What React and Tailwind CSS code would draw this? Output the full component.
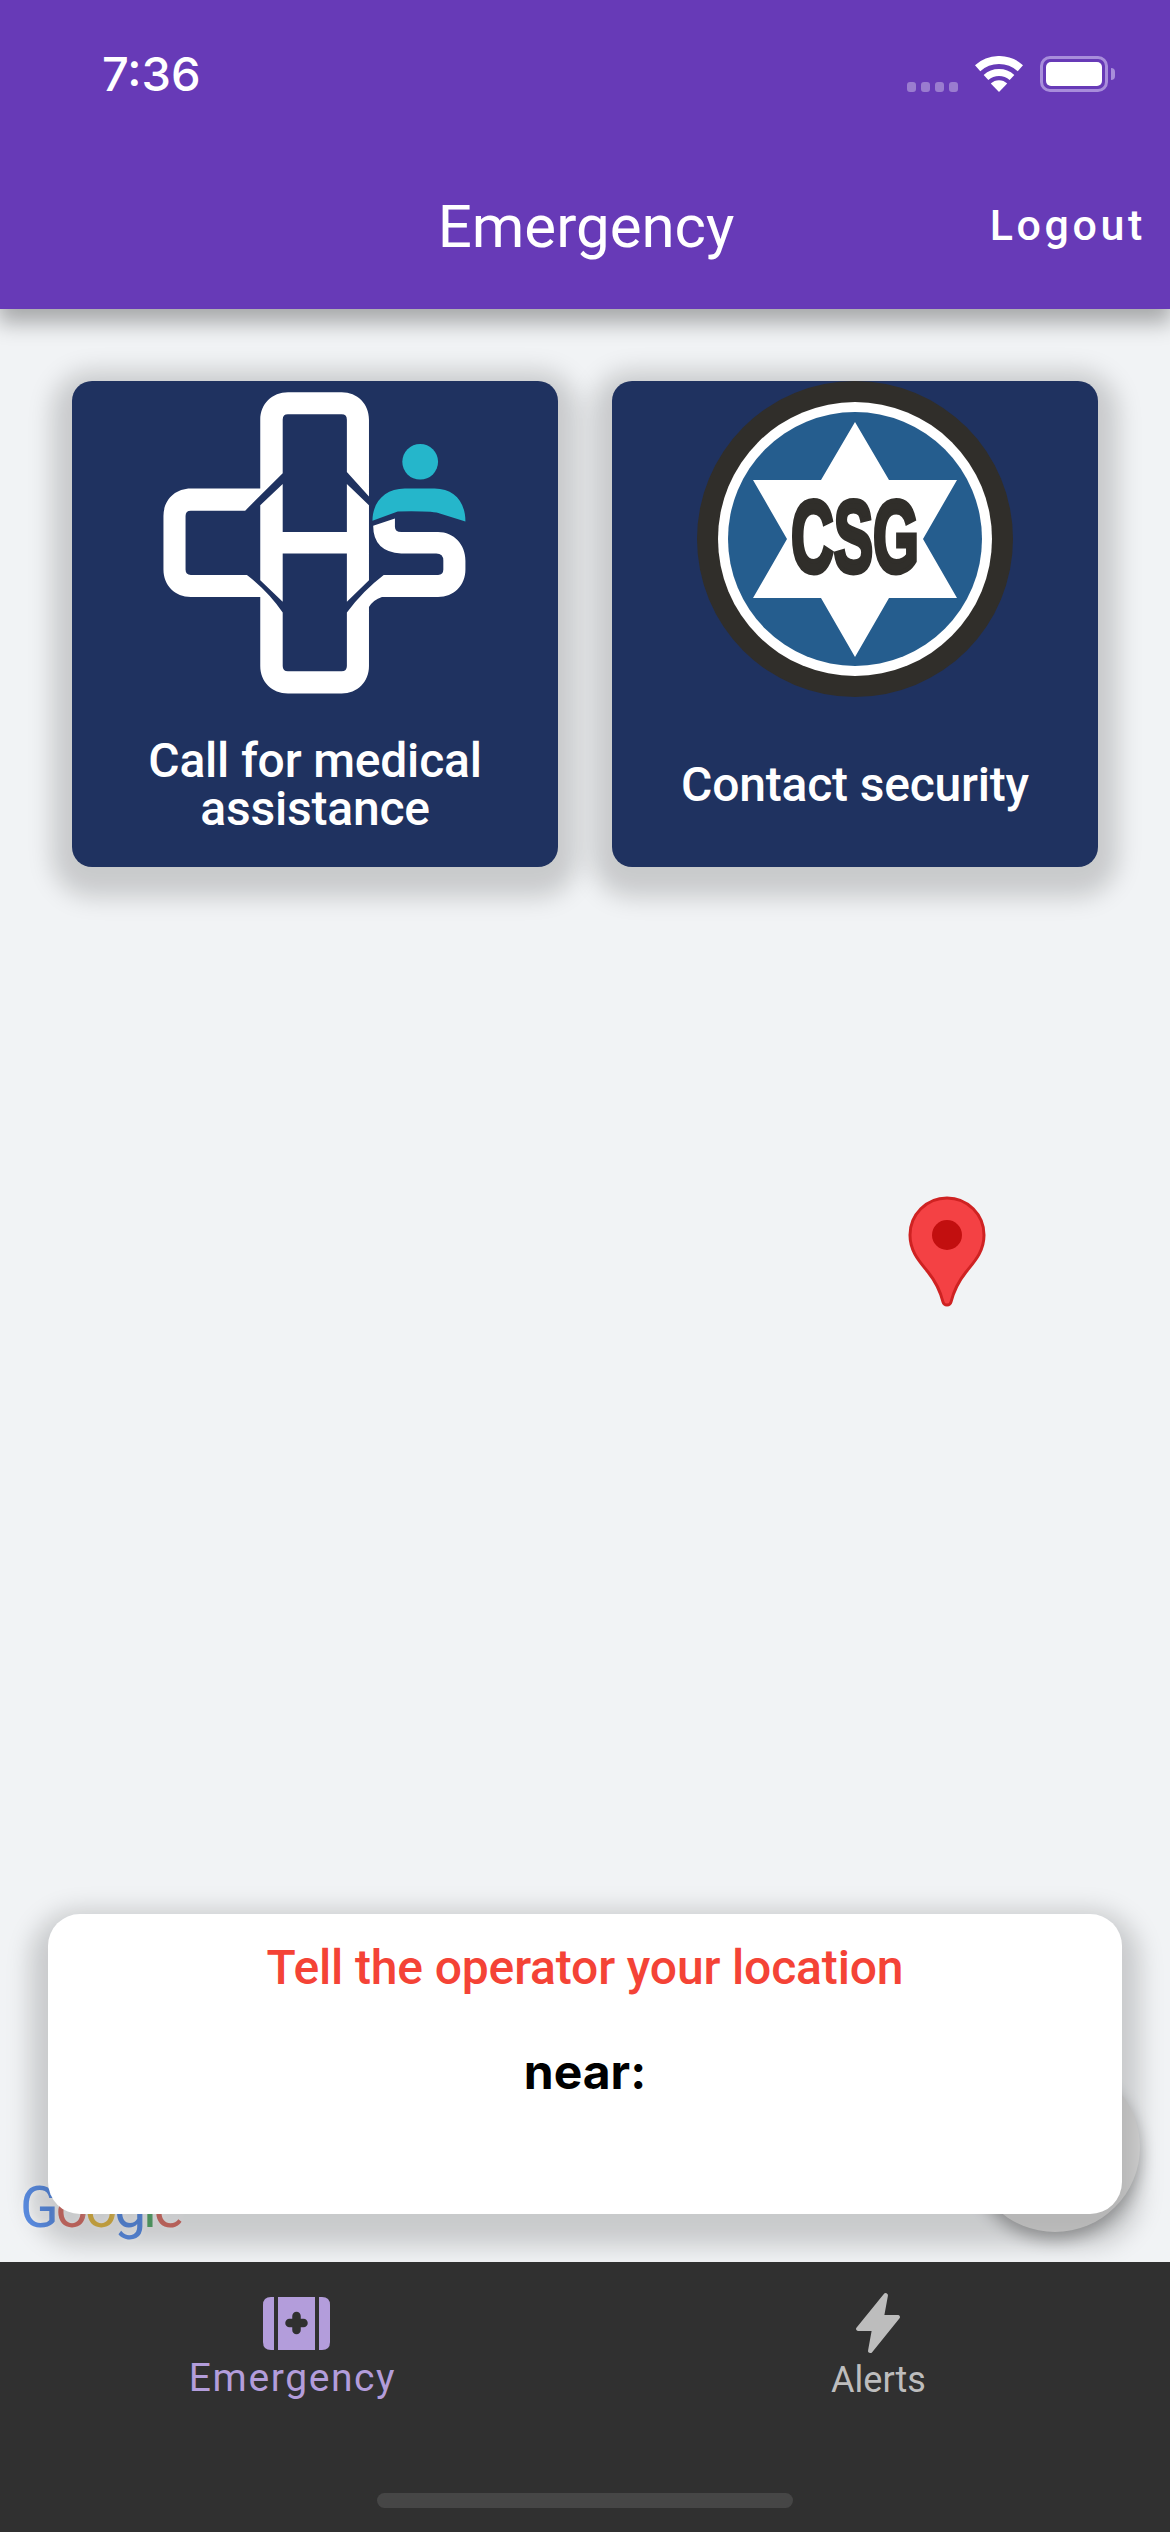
import React from "react";
import { IoFlash } from "react-icons/io5";

const roboto = "font-['Roboto',sans-serif]";

function Wifi() {
  return (
    <svg width="48" height="36" viewBox="0 0 48 36" fill="none">
      <path d="M2.6 12.2A32 32 0 0 1 45.4 12.2" stroke="#fff" strokeWidth="8" />
      <path d="M11 21.5A19.5 19.5 0 0 1 37 21.5" stroke="#fff" strokeWidth="7" />
      <path d="M24 36L15.8 27.6A11.5 11.5 0 0 1 32.2 27.6Z" fill="#fff" />
    </svg>
  );
}

function StatusBar() {
  return (
    <div className="flex h-[68px] mt-[40px] items-center justify-between pl-[102px] pr-[55px]">
      <span className="font-['Inter',sans-serif] text-[47px] leading-[68px] font-medium text-white">7:36</span>
      <div className="flex items-center">
        <div className="flex gap-[5px] mt-[26px] mr-[17px]">
          <span className="h-[10px] w-[9px] rounded-[3px] bg-[#9a7ccf]" />
          <span className="h-[10px] w-[9px] rounded-[3px] bg-[#9a7ccf]" />
          <span className="h-[10px] w-[9px] rounded-[3px] bg-[#9a7ccf]" />
          <span className="h-[10px] w-[9px] rounded-[3px] bg-[#9a7ccf]" />
        </div>
        <Wifi />
        <div className="ml-[17px] h-[36px] w-[68px] rounded-[10px] border-[3px] border-[#a88ddb] p-[3px]">
          <div className="h-full w-full rounded-[5px] bg-white" />
        </div>
        <div className="ml-[3px] h-[12px] w-[4px] rounded-r-[4px] bg-[#a88ddb]" />
      </div>
    </div>
  );
}

function Header() {
  return (
    <header className="relative z-20 h-[309px] shrink-0 bg-[#673ab7] shadow-[0_12px_20px_2px_rgba(0,0,0,0.3)]">
      <StatusBar />
      <div className={`mt-[83px] grid h-[72px] grid-cols-[1fr_auto_1fr] items-center ${roboto} text-white`}>
        <span />
        <h1 className="text-[60px] leading-[72px] font-normal pl-[2px]">Emergency</h1>
        <span className="justify-self-end pr-[24px] pb-[5px] text-[43px] leading-[50px] font-medium tracking-[3.6px]">Logout</span>
      </div>
    </header>
  );
}

function ChsLogo() {
  return (
    <svg width="316" height="316" viewBox="333.6 86.8 901 885" preserveAspectRatio="none">
      <path
        fill="#fff"
        d="M692 345L585 450H430Q415 450 415 465V615Q415 630 430 630H590Q650 675 692 735V885Q692 900 707 900H860Q875 900 875 885V735Q920 675 980 630H1135Q1150 630 1150 615V590Q1150 570 1130 570H1030Q950 565 950 492L1012 472V495Q1012 510 1030 510H1135C1180 510 1213 545 1213 590V615C1213 660 1180 692 1135 692H975Q950 700 938 720V885C938 930 905 962 860 962H707C662 962 628 930 628 885V692H430C385 692 352 660 352 615V465C352 420 385 388 430 388H628V195C628 150 662 118 707 118H860C905 118 938 150 938 195V410L875 342V195Q875 180 860 180H707Q692 180 692 195Z"
      />
      <path
        fill="#fff"
        d="M692 375V510H875V375L938 435V645L875 705V570H692V705L628 645V435Z"
      />
      <ellipse cx="1084" cy="313" rx="51" ry="50" fill="#25b6cb" />
      <path
        fill="#25b6cb"
        d="M948 478C948 425 985 388 1040 388H1125C1180 388 1213 425 1213 480L1140 458Q1125 450 1020 452Z"
      />
    </svg>
  );
}

function CsgLogo() {
  return (
    <svg width="316" height="316" viewBox="0 0 316 316">
      <circle cx="158" cy="158" r="158" fill="#302e2a" />
      <circle cx="158" cy="158" r="137" fill="#fff" />
      <circle cx="158" cy="158" r="127" fill="#255d8e" />
      <polygon
        fill="#fff"
        points="158,41 192,99 260,99 226,158 260,217 192,217 158,276 124,217 56,217 90,158 56,99 124,99"
      />
      <text
        x="158"
        y="191"
        textAnchor="middle"
        textLength="128"
        lengthAdjust="spacingAndGlyphs"
        fontFamily="'Liberation Sans', sans-serif"
        fontWeight="700"
        fontSize="102"
        fill="#302e2a"
        stroke="#302e2a"
        strokeWidth="5"
      >
        CSG
      </text>
    </svg>
  );
}

function ActionCard({ logo, children }) {
  return (
    <div className="flex h-[486px] w-[486px] flex-col items-center rounded-[20px] bg-[#1f3260] shadow-[0_10px_24px_20px_rgba(0,0,0,0.17)]">
      <div className="h-[316px] w-[316px]">{logo}</div>
      <div className={`flex flex-1 items-center justify-center pt-[6px] text-center ${roboto} text-[48px] leading-[48px] tracking-[-0.2px] font-medium text-white`}>
        {children}
      </div>
    </div>
  );
}

function Pin() {
  return (
    <svg className="absolute left-[908px] top-[887px]" width="78" height="111" viewBox="0 0 78 111">
      <path
        d="M39 2C18.5 2 2 18.5 2 39C2 56 12 66 20 76C28 86 32 94 35 106C36 110 42 110 43 106C46 94 50 86 58 76C66 66 76 56 76 39C76 18.5 59.5 2 39 2Z"
        fill="#f44144"
        stroke="#cf2222"
        strokeWidth="3"
      />
      <circle cx="39" cy="39" r="15" fill="#c20f0f" />
    </svg>
  );
}

function GoogleMark() {
  return (
    <div className={`absolute bottom-[24px] left-[20px] ${roboto} text-[57px] leading-[60px] tracking-[-3.2px] [text-shadow:0_0_7px_rgba(255,255,255,0.8)]`}>
      <span className="text-[#5c8fe6]">G</span>
      <span className="text-[#d8736b]">o</span>
      <span className="text-[#e1b94a]">o</span>
      <span className="text-[#5c8fe6]">g</span>
      <span className="text-[#5aab6e]">l</span>
      <span className="text-[#d8736b]">e</span>
    </div>
  );
}

function MedkitIcon() {
  return (
    <svg width="67" height="53" viewBox="0 0 67 53">
      <path d="M11 0V53H8Q0 53 0 45V8Q0 0 8 0Z" fill="#b39ddb" />
      <path d="M56 0V53H59Q67 53 67 45V8Q67 0 59 0Z" fill="#b39ddb" />
      <rect x="15" y="0" width="37" height="53" fill="#b39ddb" />
      <path d="M33.5 19V33M26.5 26H40.5" stroke="#303030" strokeWidth="8.5" strokeLinecap="round" />
    </svg>
  );
}

function TabBar() {
  return (
    <nav className={`relative z-20 h-[270px] shrink-0 bg-[#303030] ${roboto}`}>
      <div className="flex h-[231px]">
        <div className="flex w-[585px] flex-col items-center pt-[35px]">
          <div className="ml-[8px] h-[53px]">
            <MedkitIcon />
          </div>
          <span className="mt-[6px] text-[39px] leading-[44px] tracking-[1.6px] text-[#b39ddb]">Emergency</span>
        </div>
        <div className="flex w-[585px] flex-col items-center pt-[29px]">
          <IoFlash size={64} color="#bdbdbd" />
          <span className="mt-[5px] ml-[2px] text-[36px] leading-[40px] text-[#bdbdbd]">Alerts</span>
        </div>
      </div>
      <div className="mx-auto h-[15px] w-[416px] rounded-[8px] bg-[#464646]" />
    </nav>
  );
}

export default function App() {
  return (
    <div className="flex h-[2532px] w-[1170px] flex-col overflow-hidden bg-[#f1f3f5]">
      <Header />
      <main className="relative flex flex-1 flex-col">
        <Pin />
        <GoogleMark />
        <div className="absolute bottom-[30px] right-[30px] h-[170px] w-[170px] rounded-full bg-[#dcdcdc] shadow-[0_8px_16px_rgba(0,0,0,0.3)]" />
        <div className="relative flex gap-[54px] px-[72px] pt-[72px]">
          <ActionCard logo={<ChsLogo />}>
            <span>
              Call for medical
              <br />
              assistance
            </span>
          </ActionCard>
          <ActionCard logo={<CsgLogo />}>
            <span>Contact security</span>
          </ActionCard>
        </div>
        <div className="relative mx-[48px] mb-[48px] mt-auto flex h-[300px] flex-col items-center rounded-[32px] bg-white pt-[24px] shadow-[0_14px_24px_18px_rgba(0,0,0,0.17)]">
          <p className={`${roboto} text-[48px] leading-[60px] tracking-[-0.15px] font-medium text-[#f44336]`}>Tell the operator your location</p>
          <p className="mt-[46px] font-['Inter',sans-serif] text-[48px] leading-[56px] font-bold text-black">near:</p>
        </div>
      </main>
      <TabBar />
    </div>
  );
}
